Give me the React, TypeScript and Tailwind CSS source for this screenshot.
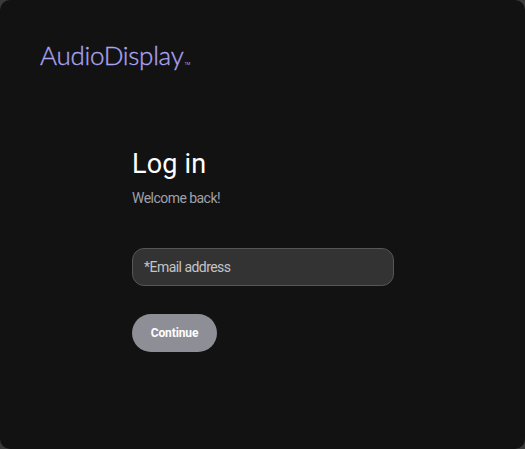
export default function App() {
  return (
    <div className="h-[449px] w-[525px] overflow-hidden bg-[#3a3a3a] font-['Roboto',sans-serif]">
      <div className="flex h-full flex-col rounded-[10px] bg-[#121212] pl-10 pt-[35px]">
        <div className="flex h-[38px] items-start text-[#a9a3f0]">
          <span className="font-['Lato',sans-serif] text-[26px] font-light leading-[40px] tracking-[-0.3px] [-webkit-text-stroke:0.35px_#a9a3f0]">AudioDisplay</span>
          <span className="ml-px mt-[26px] text-[4px] leading-[6px]">TM</span>
        </div>

        <div className="ml-[92px] mt-[73px] flex w-[262px] flex-col items-start">
          <h1 className="text-[27px] font-normal leading-[36px] tracking-[0.2px] text-white">Log in</h1>
          <p className="mt-[6px] text-sm leading-5 tracking-[-0.54px] text-[#a0a0aa]">Welcome back!</p>

          <div className="mt-10 flex h-[38px] w-full items-center rounded-xl border border-[#55555a] bg-[#333333] pl-[11px] pr-3 text-sm tracking-[-0.54px] text-[#c4c4c9]">
            *Email address
          </div>

          <button className="mt-7 h-[38px] w-[85px] rounded-full bg-[#8e8e97] text-xs font-bold tracking-[-0.1px] text-white">
            Continue
          </button>
        </div>
      </div>
    </div>
  )
}
